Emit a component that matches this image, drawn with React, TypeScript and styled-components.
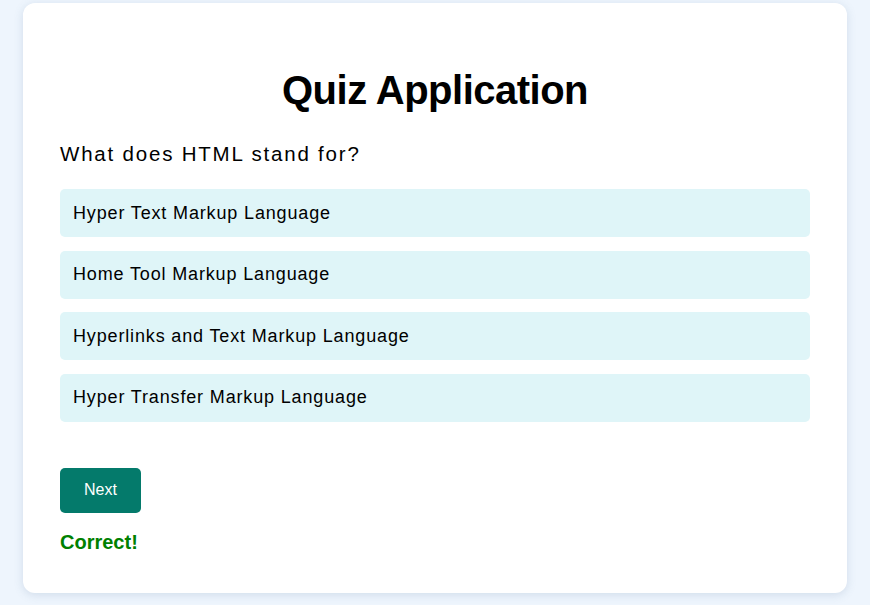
import React from "react";
import styled, { createGlobalStyle } from "styled-components";

const Global = createGlobalStyle`
  html, body { margin: 0; padding: 0; }
  body {
    background: #eef5fd;
    font-family: "Liberation Sans", Arial, sans-serif;
    color: #000;
  }
`;

const Page = styled.div`
  padding: 3px 23px 12px;
`;

const Card = styled.div`
  background: #fff;
  border-radius: 12px;
  box-shadow: 0 2px 10px rgba(80, 110, 150, 0.18);
  height: 590px;
  box-sizing: border-box;
  padding: 64px 37px 0;
`;

const Title = styled.h1`
  margin: 0;
  font-size: 40px;
  line-height: 46px;
  font-weight: 700;
  letter-spacing: -0.5px;
  text-align: center;
`;

const Question = styled.h2`
  margin: 29px 0 24px;
  font-size: 20.5px;
  line-height: 23px;
  font-weight: 400;
  letter-spacing: 1.8px;
`;

const Options = styled.div`
  display: flex;
  flex-direction: column;
  gap: 13.67px;
`;

const Option = styled.div`
  height: 48px;
  display: flex;
  align-items: center;
  padding: 0 13px;
  background: #dff5f8;
  border-radius: 5px;
  font-size: 18px;
  line-height: 21px;
  letter-spacing: 0.85px;
  cursor: pointer;
`;

const NextButton = styled.button`
  margin-top: 46px;
  width: 81px;
  height: 45px;
  border: none;
  border-radius: 5px;
  background: #047a6b;
  color: #fff;
  font-family: "Liberation Sans", Arial, sans-serif;
  font-size: 16px;
  font-weight: 300;
  cursor: pointer;
  display: block;
`;

const Feedback = styled.p<{ $ok: boolean }>`
  margin: 18px 0 0;
  font-size: 20px;
  line-height: 23px;
  font-weight: 700;
  color: ${(p) => (p.$ok ? "#008000" : "#c00")};
`;

const options = [
  "Hyper Text Markup Language",
  "Home Tool Markup Language",
  "Hyperlinks and Text Markup Language",
  "Hyper Transfer Markup Language",
];

export default function App() {
  return (
    <>
      <Global />
      <Page>
        <Card>
          <Title>Quiz Application</Title>
          <Question>What does HTML stand for?</Question>
          <Options>
            {options.map((o) => (
              <Option key={o}>{o}</Option>
            ))}
          </Options>
          <NextButton>Next</NextButton>
          <Feedback $ok>Correct!</Feedback>
        </Card>
      </Page>
    </>
  );
}
